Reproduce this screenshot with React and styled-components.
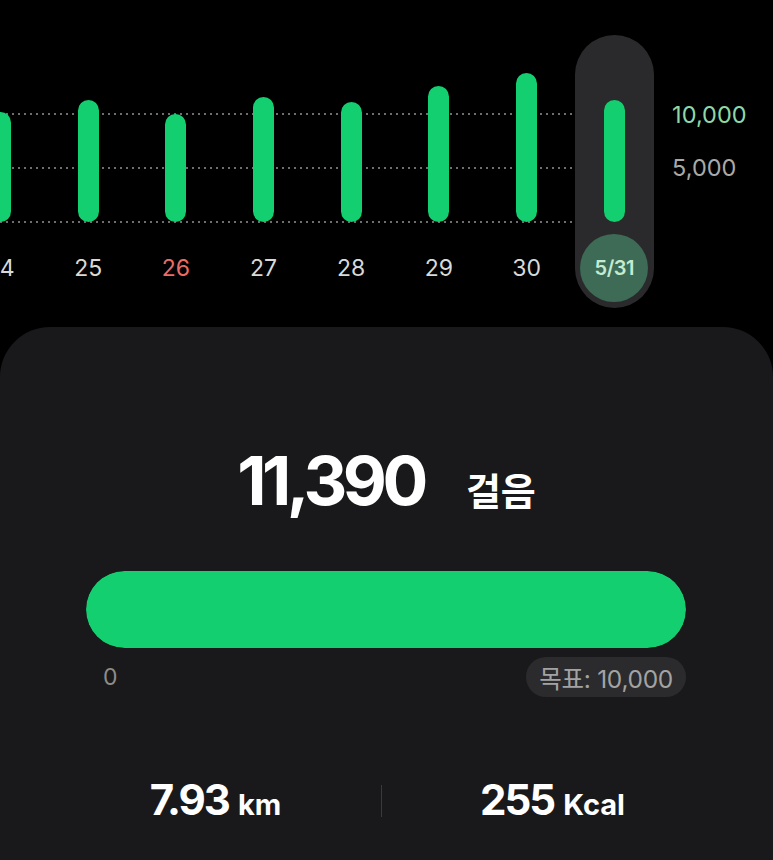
import styled, { createGlobalStyle } from "styled-components";

const days = [
	{ label: "24", steps: 110 },
	{ label: "25", steps: 122 },
	{ label: "26", steps: 108, holiday: true },
	{ label: "27", steps: 125 },
	{ label: "28", steps: 120 },
	{ label: "29", steps: 136 },
	{ label: "30", steps: 149 },
	{ label: "5/31", steps: 122, selected: true },
];

const gridLines = [113, 167, 221];

export default function App() {
	return (
		<>
			<GlobalStyle />
			<Page>
				<Chart>
					{gridLines.map((top) => (
						<GridLine key={top} $top={top} />
					))}

					<Columns>
						{days.map((day) => (
							<Column key={day.label}>
								<ColumnInner $selected={day.selected}>
									<Plot>
										<Bar $h={day.steps} />
									</Plot>
									{day.selected ? (
										<DateBubble>{day.label}</DateBubble>
									) : (
										<DayLabel $holiday={day.holiday}>{day.label}</DayLabel>
									)}
								</ColumnInner>
							</Column>
						))}
					</Columns>

					<Axis>
						<AxisLabel $goal>10,000</AxisLabel>
						<AxisLabel>5,000</AxisLabel>
					</Axis>
				</Chart>

				<Card>
					<Headline>
						<Steps>11,390</Steps>
						<StepsUnit>걸음</StepsUnit>
					</Headline>

					<Progress>
						<ProgressFill style={{ width: "100%" }} />
					</Progress>

					<ProgressScale>
						<Zero>0</Zero>
						<GoalBadge>목표: 10,000</GoalBadge>
					</ProgressScale>

					<Stats>
						<Stat>
							<StatValue>7.93</StatValue>
							<StatUnit>km</StatUnit>
						</Stat>
						<Divider />
						<Stat>
							<StatValue>255</StatValue>
							<StatUnit>Kcal</StatUnit>
						</Stat>
					</Stats>
				</Card>
			</Page>
		</>
	);
}

const GlobalStyle = createGlobalStyle`
	* {
		box-sizing: border-box;
	}

	body {
		margin: 0;
		background-color: #000;
		font-family: "Inter", "Noto Sans CJK KR", sans-serif;
		color: #fff;
	}
`;

const Page = styled.div`
	width: 773px;
	height: 860px;
	display: flex;
	flex-direction: column;
	overflow: hidden;
	background-color: #000;
`;

const Chart = styled.div`
	position: relative;
	height: 327px;
	flex-shrink: 0;
	display: flex;
	padding-top: 35px;
	overflow: hidden;
`;

const GridLine = styled.div`
	position: absolute;
	left: 0;
	top: ${({ $top }) => $top}px;
	width: 600px;
	height: 2px;
	background-image: repeating-linear-gradient(
		to right,
		#6e6e6e 0 2px,
		transparent 2px 6px
	);
`;

const Columns = styled.div`
	position: relative;
	z-index: 1;
	display: flex;
	margin-left: -43.4px;
`;

const Column = styled.div`
	width: 87.7px;
	display: flex;
	justify-content: center;
`;

const ColumnInner = styled.div`
	width: 79px;
	height: 273px;
	display: flex;
	flex-direction: column;
	align-items: center;
	border-radius: 40px;
	background-color: ${({ $selected }) => ($selected ? "#2a2a2c" : "transparent")};
`;

const Plot = styled.div`
	height: 187px;
	display: flex;
	align-items: flex-end;
`;

const Bar = styled.div`
	width: 21px;
	height: ${({ $h }) => $h}px;
	border-radius: 11px;
	background-color: #13cf6f;
`;

const DayLabel = styled.span`
	margin-top: 12px;
	height: 68px;
	line-height: 68px;
	font-size: 23px;
	color: ${({ $holiday }) => ($holiday ? "#ea6d6a" : "#d9d9d9")};
`;

const DateBubble = styled.span`
	margin-top: 12px;
	width: 68px;
	height: 68px;
	border-radius: 50%;
	display: flex;
	align-items: center;
	justify-content: center;
	background-color: #3d6b56;
	color: #c4ebd2;
	font-size: 20px;
	font-weight: 600;
	letter-spacing: -0.5px;
`;

const Axis = styled.div`
	display: flex;
	flex-direction: column;
	gap: 27px;
	margin-left: 14px;
	padding-top: 67px;
`;

const AxisLabel = styled.span`
	font-size: 23.5px;
	line-height: 26px;
	color: ${({ $goal }) => ($goal ? "#8fd8a5" : "#a9a9a9")};
`;

const Card = styled.div`
	flex: 1;
	display: flex;
	flex-direction: column;
	padding-top: 119px;
	background-color: #19191b;
	border-radius: 50px 50px 0 0;
`;

const Headline = styled.div`
	display: flex;
	align-items: baseline;
	justify-content: center;
	gap: 42px;
`;

const Steps = styled.span`
	font-size: 68px;
	line-height: 68px;
	font-weight: 700;
	letter-spacing: -4.5px;
`;

const StepsUnit = styled.span`
	font-size: 38px;
	font-weight: 700;
`;

const Progress = styled.div`
	margin: 55px 87px 0 86px;
	height: 77px;
	border-radius: 39px;
	background-color: #2a2a2c;
	overflow: hidden;
`;

const ProgressFill = styled.div`
	height: 100%;
	border-radius: 39px;
	background-color: #13cf6f;
`;

const ProgressScale = styled.div`
	margin: 9px 87px 0 103px;
	display: flex;
	align-items: center;
	justify-content: space-between;
`;

const Zero = styled.span`
	font-size: 23px;
	color: #8c8c8c;
`;

const GoalBadge = styled.span`
	height: 40px;
	padding: 0 13px;
	display: flex;
	align-items: center;
	border-radius: 20px;
	background-color: #2b2b2d;
	font-size: 24.5px;
	letter-spacing: -0.3px;
	color: #a3a3a3;
`;

const Stats = styled.div`
	margin-top: 82px;
	padding: 0 50px;
	display: grid;
	grid-template-columns: 331px 1px 1fr;
	align-items: center;
`;

const Stat = styled.div`
	display: flex;
	align-items: baseline;
	justify-content: center;
	gap: 9px;
`;

const StatValue = styled.span`
	font-size: 42px;
	line-height: 42px;
	font-weight: 700;
	letter-spacing: -2px;
`;

const StatUnit = styled.span`
	font-size: 29px;
	font-weight: 700;
`;

const Divider = styled.div`
	width: 1px;
	height: 32px;
	background-color: #3a3a3c;
`;
